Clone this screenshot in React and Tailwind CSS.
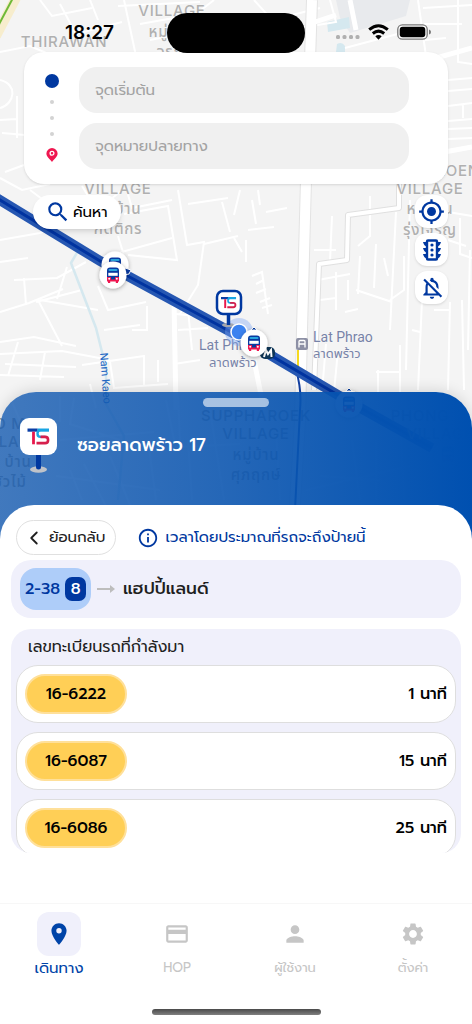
import React from "react";
import {
  MdSearch,
  MdMyLocation,
  MdOutlineNotificationsOff,
  MdOutlineInfo,
  MdLocationOn,
  MdOutlineCreditCard,
  MdPerson,
  MdSettings,
} from "react-icons/md";
import { ChevronLeft } from "lucide-react";

const arrivals = [
  { plate: "16-6222", eta: "1 นาที" },
  { plate: "16-6087", eta: "15 นาที" },
  { plate: "16-6086", eta: "25 นาที" },
];

const tabs = [
  { label: "เดินทาง", icon: MdLocationOn, active: true },
  { label: "HOP", icon: MdOutlineCreditCard },
  { label: "ผู้ใช้งาน", icon: MdPerson },
  { label: "ตั้งค่า", icon: MdSettings },
];

const minorRoads = [
  "M0 52L30 46L58 58L84 53M0 120L17 119M17 96V138M2 133L60 138L120 128M0 80C18 84 15 104 0 108M5 172L24 165",
  "M40 0L52 16L92 8M60 4L76 34L122 22M90 0L98 20M124 0L136 56M118 6L200 2M140 24L196 14L214 0M150 40L170 36",
  "M254 0L272 20L320 8M330 0L336 22L300 28M345 48L420 28M418 0L426 56M423 8L472 5M424 24L462 24M425 40L446 38M458 0V62L472 64",
  "M448 80L472 78M448 91L472 89M448 106L472 103M463 104V118M448 121L472 119M448 129L472 128M448 139L472 138",
  "M0 178L22 190L50 184M0 240L40 233L98 210L122 190M30 190L62 214M82 186L98 212M126 188L132 208L172 200M118 236L126 262M100 258L172 238M124 214L168 206L177 260L128 255",
  "M0 262L28 258M14 280L57 278L86 262M24 278L26 305M0 312L29 303L63 289M36 302L82 290M57 299L67 267M62 346L38 300M40 300L98 310M98 286L108 310L146 302M104 330L140 325M147 306V330L132 330",
  "M0 342L34 337L76 346M0 354L62 351L110 360M5 364L76 367M18 342L8 376M0 375L64 377M45 352L40 380M82 365L144 356M110 362L114 388L168 384M144 355V386M90 384L96 408M158 360V382",
  "M178 190L187 245L204 242L198 285L180 314M204 244L238 236M188 204L228 198M222 202L230 232M176 314L216 318M178 330L208 328M188 310L192 350M174 364L200 360",
  "M240 190L234 215M248 230L274 227M252 200L256 224M246 240V262M258 190L260 205M266 212L287 208M252 276L262 272L268 314M256 284L264 280M256 293L266 289M260 302L270 298M262 308L272 305M234 238L242 252",
  "M314 250H336M332 216L330 262M318 280L350 274M336 272V310M348 280V300M320 300L336 298M345 312L358 309M360 256L358 294M356 290L392 302M370 196V236L358 246M376 244L374 288M384 258L388 276M396 212L390 330M404 256V290L390 300M410 200L406 370",
  "M448 212L472 216M460 218V254L472 258M448 240L466 246M450 302L448 390M470 250L468 350M422 300L418 390M462 300L464 390M434 310H449M412 330L420 332M376 372H400M378 370V392M400 345V392M326 344L322 392M338 350L334 392",
  "M12 402L24 430L56 426M60 396V422M74 398L70 424L120 440M60 440L154 432M70 470L82 500M84 464L108 510M110 456L132 510M56 476L160 490M148 440L156 500M160 448L240 444M188 440L192 500M210 410L224 500",
  "M166 400L174 440M178 396L180 440M300 402L304 444M276 430L280 500M306 490L410 466M320 476L380 480M352 440L360 500M376 440V500M400 410L404 500",
];

function MapBus({ x, y }) {
  return (
    <g transform={`translate(${x} ${y})`}>
      <circle r="13.500" fill="#fff" filter="url(#pinShadow)" />
      <path d="M-6 -4.500Q-6 -7.500 -3 -7.500H3Q6 -7.500 6 -4.500V3H-6Z" fill="#0a3aa0" />
      <path d="M-3.500 -5H3.500" stroke="#29a6e0" strokeWidth="2" strokeLinecap="round" />
      <path d="M-4.700 -2.200H4.700V.8H-4.700Z" fill="#fff" />
      <path d="M-6 2H6V6.500H5V8H2.800V6.500H-2.800V8H-5V6.500H-6Z" fill="#ef1750" />
      <path d="M-2 1.500H2V4.500H-2Z" fill="#0a3aa0" />
      <circle cx="-3.800" cy="3.800" r="1" fill="#fff" />
      <circle cx="3.800" cy="3.800" r="1" fill="#fff" />
    </g>
  );
}

function TsMark() {
  return (
    <g fill="none">
      <path d="M10 1.600H21.500" stroke="#19a5e3" strokeWidth="3.200" />
      <path d="M0 1.600H10" stroke="#0b3fa6" strokeWidth="3.200" />
      <path d="M13 1.600Q10 1.600 10 5Q10 8.400 13 8.400H18" stroke="#19a5e3" strokeWidth="2.400" />
      <path d="M6 3.200V15.800" stroke="#e8174b" strokeWidth="2.800" />
      <path d="M13 8.400H17.500Q20.600 8.400 20.600 11.400Q20.600 14.600 17.500 14.600H9" stroke="#d61f4c" strokeWidth="2.600" />
    </g>
  );
}

function CityMap() {
  return (
    <svg
      className="absolute inset-x-0 top-0 -z-10 h-[560px] w-full"
      viewBox="0 0 472 560"
      preserveAspectRatio="xMidYMin slice"
      role="img"
      aria-label="Map"
    >
      <defs>
        <filter id="pinShadow" x="-40%" y="-40%" width="180%" height="180%">
          <feDropShadow dx="0" dy="1" stdDeviation="2" floodOpacity="0.35" />
        </filter>
      </defs>
      <rect width="472" height="560" fill="#f4f4f4" />
      <path d="M336 0H410L406 16L350 33L340 18Z" fill="#e8eaed" />
      <path d="M327 22L349 17L350 28L328 32Z" fill="#d5e8ef" />
      <path d="M337 44Q342 41 345 46V52H336Z" fill="#d5e8ef" />
      <g fill="none" stroke="#fff" strokeWidth="2">
        {minorRoads.map((d) => (
          <path key={d} d={d} />
        ))}
      </g>
      <g fill="none" strokeLinejoin="round">
        <path d="M312 0L306 180L302 330L300 420L294 520" stroke="#e3e3e3" strokeWidth="12" />
        <path d="M312 0L306 180L302 330L300 420L294 520" stroke="#fff" strokeWidth="10" />
        <path d="M315 22L336 15M350 0L356 30M315 92L472 48M428 155L472 147" stroke="#fff" strokeWidth="5" />
        <path d="M399 184V208L348 215L347 260L319 264L314 390" stroke="#e0e0e0" strokeWidth="6" />
        <path d="M399 184V208L348 215L347 260L319 264L314 390" stroke="#fff" strokeWidth="4" />
        <path d="M174 300L176 410M254 360L264 410" stroke="#fff" strokeWidth="5" />
        <path d="M-4 36L18 -6" stroke="#f7edcd" strokeWidth="10" />
        <path d="M-4 30L14 -4" stroke="#6fb936" strokeWidth="2" />
        <path d="M82 244L71 263L96 328L106 368L106 404L124 436L118 500" stroke="#d5e8ef" strokeWidth="2.500" />
        <path d="M298 350V372" stroke="#f5d91f" strokeWidth="2" />
        <path d="M296 370Q302 390 300 410L295 510" stroke="#123fa3" strokeWidth="2" />
      </g>
      <path d="M-5 197L100 261L233 333L348 401L432 448" fill="none" stroke="#2657b2" strokeWidth="10" />
      <path d="M-5 197L100 261L233 333L348 401L432 448" fill="none" stroke="#0033a0" strokeWidth="3" />

      <g className="font-['Inter','Noto_Sans_Thai',sans-serif] font-medium tracking-wider" fontSize="15" fill="#b0b0b0" stroke="#f8f8f8" strokeWidth="1" paintOrder="stroke" textAnchor="middle">
        <text x="64" y="47">THIRAWAN</text>
        <text x="172" y="16">VILLAGE</text>
        <text x="172" y="37">หมู่บ้าน</text>
        <text x="172" y="57">อรุณ</text>
        <text x="118" y="194">VILLAGE</text>
        <text x="118" y="214">หมู่บ้าน</text>
        <text x="118" y="234">กิตติกร</text>
        <text x="440" y="176">CHAROEN</text>
        <text x="430" y="194">VILLAGE</text>
        <text x="430" y="214">หมู่บ้าน</text>
        <text x="430" y="235">รุ่งเจริญ</text>
      </g>
      <g className="font-['Inter','Noto_Sans_Thai',sans-serif] font-medium tracking-wider" fontSize="15" fill="#a0a0a0" textAnchor="middle">
        <text x="256" y="421">SUPPHAROEK</text>
        <text x="256" y="439">VILLAGE</text>
        <text x="256" y="460">หมู่บ้าน</text>
        <text x="256" y="480">ศุภฤกษ์</text>
        <text x="420" y="421">PHONG</text>
        <text x="440" y="439">VILLAGE</text>
        <text x="18" y="429">O MAI</text>
        <text x="7" y="447">VILLAGE</text>
        <text x="18" y="467">บ้าน</text>
        <text x="10" y="487">ชัวไม้</text>
      </g>
      <g className="font-['Roboto','Noto_Sans_Thai',sans-serif]" fontSize="14" fill="#7783a8" stroke="#f8f8f8" strokeWidth="1" paintOrder="stroke">
        <text x="313" y="342">Lat Phrao</text>
        <text x="313" y="358" fontSize="13">ลาดพร้าว</text>
        <text x="199" y="350">Lat Phrao</text>
        <text x="209" y="367" fontSize="13">ลาดพร้าว</text>
      </g>
      <text transform="translate(100 353) rotate(86)" className="font-['Roboto',sans-serif]" fontSize="11" fill="#2368c4">Nam Kaeo</text>

      <g transform="translate(296 338)">
        <rect width="12" height="12" rx="2" fill="#8d90a5" />
        <path d="M3 9.500V3.500Q3 2.500 4 2.500H8Q9 2.500 9 3.500V9.500M3 6H9" fill="none" stroke="#fff" strokeWidth="1.300" />
      </g>

      <MapBus x={115} y={265} />
      <path d="M125 268L131 270L129 274L124 275Z" fill="#0a3aa0" stroke="#fff" />
      <MapBus x={113} y={275} />

      <circle cx="239" cy="332" r="14" fill="#7fa8f5" opacity="0.4" />
      <ellipse cx="228" cy="325" rx="6" ry="2" fill="#a4a7ad" />
      <path d="M228.500 312V325" stroke="#0038a0" strokeWidth="3.500" />
      <rect x="217" y="291" width="24" height="23" rx="6" fill="#fff" stroke="#0038a0" strokeWidth="2.500" />
      <g transform="translate(221 297) scale(.7)">
        <TsMark />
      </g>
      <circle cx="239" cy="332" r="8" fill="#3b82f0" stroke="#fff" strokeWidth="1.500" />
      <rect x="260" y="347" width="15" height="12" rx="5" fill="#0d3557" />
      <path d="M264 357L266 350L268 354L271 350L271.500 357" fill="none" stroke="#fff" strokeWidth="2" />
      <path d="M248 333L254 327L260 333Z" fill="#0038a0" stroke="#fff" />
      <MapBus x={254} y={343} />
      <path d="M342 395L349 388L356 395Z" fill="#0038a0" stroke="#fff" />
      <MapBus x={349} y={404} />
      <g opacity="0.35">
        <MapBus x={448} y={454} />
      </g>
    </svg>
  );
}

function StatusBar() {
  return (
    <header className="relative z-10 grid h-13 grid-cols-[1fr_138px_1fr] items-start pt-[13px]">
      <time className="justify-self-center pl-3 font-['Inter',sans-serif] text-[19px] leading-10 font-semibold text-black">18:27</time>
      <div className="h-10 rounded-full bg-black" />
      <div className="flex h-[38px] items-center gap-2 pl-[31px]">
        <svg width="24" height="6" viewBox="0 0 24 6" fill="#b0b0b0" className="mt-2.5" aria-hidden="true">
          <rect width="4" height="4" y="1" rx="1.500" />
          <rect x="6.500" width="4" height="4" y="1" rx="1.500" />
          <rect x="13" width="4" height="4" y="1" rx="1.500" />
          <rect x="19.500" width="4" height="4" y="1" rx="1.500" />
        </svg>
        <svg width="21" height="16" viewBox="0 0 21 16" fill="none" stroke="#000" strokeWidth="3" aria-hidden="true">
          <path d="M1.200 5.700Q10.500 -2.200 19.800 5.700" />
          <path d="M4.800 9.500Q10.500 4.800 16.200 9.500" />
          <path d="M7.300 12.300Q10.500 9.800 13.700 12.300L10.500 15.700Z" fill="#000" stroke="none" />
        </svg>
        <svg width="35" height="16" viewBox="0 0 35 16" aria-hidden="true">
          <rect x=".8" y=".8" width="29.400" height="14.400" rx="4.500" fill="#fff" stroke="#777" strokeWidth="1.300" />
          <rect x="2.700" y="2.700" width="25.600" height="10.600" rx="3" />
          <path d="M32 5.500Q34 6 34 8Q34 10 32 10.500Z" fill="#777" />
        </svg>
      </div>
    </header>
  );
}

function RouteForm() {
  return (
    <form className="mx-6 flex rounded-[20px] bg-white py-[15px] pr-[39px] shadow-sm" onSubmit={(e) => e.preventDefault()}>
      <div className="flex w-[55px] flex-col items-center justify-between pt-[7px] pb-[7px]" aria-hidden="true">
        <span className="size-3.5 rounded-full bg-[#0038a0]" />
        <span className="size-1 rounded-full bg-[#d3d3d3]" />
        <span className="size-1 rounded-full bg-[#d3d3d3]" />
        <span className="size-1 rounded-full bg-[#d3d3d3]" />
        <svg width="12" height="14" viewBox="0 0 12 14">
          <path d="M6 0A5.600 5.600 0 0 1 11.600 5.600C11.600 9 8.400 11 6 14C3.600 11 .4 9 .4 5.600A5.600 5.600 0 0 1 6 0Z" fill="#ef1750" />
          <circle cx="6" cy="5.300" r="1.900" fill="none" stroke="#fff" strokeWidth="1.300" />
        </svg>
      </div>
      <div className="flex flex-1 flex-col gap-2.5">
        <input type="text" aria-label="จุดเริ่มต้น" placeholder="จุดเริ่มต้น" className="h-[46px] w-full rounded-[18px] bg-[#f0f0f0] px-4 text-[15px] placeholder:text-[#a3a3a3]" />
        <input type="text" aria-label="จุดหมายปลายทาง" placeholder="จุดหมายปลายทาง" className="h-[46px] w-full rounded-[18px] bg-[#f0f0f0] px-4 text-[15px] placeholder:text-[#a3a3a3]" />
      </div>
    </form>
  );
}

function TrafficLightIcon() {
  return (
    <svg width="20" height="22" viewBox="0 0 20 22" fill="#0038a0" aria-hidden="true">
      <path d="M1 3H5V7.500Q2 7 1 3ZM1 9H5V13.500Q2 13 1 9ZM1 15H5V19.500Q2 19 1 15ZM19 3H15V7.500Q18 7 19 3ZM19 9H15V13.500Q18 13 19 9ZM19 15H15V19.500Q18 19 19 15Z" />
      <rect x="5" y="1.500" width="10" height="19" rx="1" fill="#fff" stroke="#0038a0" strokeWidth="2.400" />
      <circle cx="10" cy="6" r="1.600" />
      <circle cx="10" cy="11" r="1.600" />
      <circle cx="10" cy="16" r="1.600" />
    </svg>
  );
}

function MapControls() {
  const control = "grid size-[33px] place-items-center rounded-xl bg-white text-[#0038a0] shadow-sm";
  return (
    <div className="flex h-[208px] items-start justify-between pt-[11px] pr-6 pl-[33px]">
      <button type="button" className="flex h-[34px] items-center gap-0.5 rounded-full bg-white pr-3.5 pl-3 text-[15px] text-black shadow-md">
        <MdSearch className="size-[26px] text-[#0038a0]" />
        ค้นหา
      </button>
      <div className="flex flex-col gap-[5px]">
        <button type="button" aria-label="ตำแหน่งของฉัน" className={control}>
          <MdMyLocation className="size-[27px]" />
        </button>
        <button type="button" aria-label="การจราจร" className={control}>
          <TrafficLightIcon />
        </button>
        <button type="button" aria-label="ปิดการแจ้งเตือน" className={control}>
          <MdOutlineNotificationsOff className="size-[26px]" />
        </button>
      </div>
    </div>
  );
}

function StopHeader() {
  return (
    <div className="h-[113px] pt-1.5">
      <div className="mx-auto h-[9px] w-[66px] rounded-full bg-white/60" />
      <div className="flex items-start gap-5 pt-[11px] pl-5">
        <svg width="37" height="55" viewBox="0 0 37 55" aria-hidden="true">
          <ellipse cx="18.500" cy="51.500" rx="8.500" ry="3.200" fill="#bfc3c9" />
          <path d="M18.500 35V49" stroke="#0038a0" strokeWidth="5" strokeLinecap="round" />
          <rect width="37" height="37" rx="9" fill="#fff" />
          <g transform="translate(7.500 10.500)">
            <TsMark />
          </g>
        </svg>
        <h1 className="pt-[13px] text-lg leading-7 font-medium text-white">ซอยลาดพร้าว 17</h1>
      </div>
    </div>
  );
}

export default function App() {
  return (
    <div className="relative isolate flex min-h-screen flex-col overflow-hidden bg-[#f4f4f4] font-['Prompt','Inter','Noto_Sans_Thai',sans-serif]">
      <CityMap />
      <StatusBar />
      <RouteForm />
      <MapControls />

      <main className="flex flex-1 flex-col rounded-t-[36px] bg-linear-to-r from-[#145ab0]/80 via-[#0c56b0]/90 to-[#0050b0] shadow-[0_-2px_14px_rgba(0,0,0,0.12)]">
        <StopHeader />
        <div className="flex flex-1 flex-col rounded-t-[34px] bg-white pt-[15px]">
          <div className="flex items-center gap-[21px] px-4">
            <button type="button" className="flex h-[35px] items-center gap-1 rounded-full border border-[#e0e0e0] pr-2.5 pl-1.5 text-[15px] text-[#1f1f1f]">
              <ChevronLeft className="size-[22px]" />
              ย้อนกลับ
            </button>
            <p className="flex items-center gap-1.5 text-[15px] text-[#0038a0]">
              <MdOutlineInfo className="size-[22px] shrink-0" />
              เวลาโดยประมาณที่รถจะถึงป้ายนี้
            </p>
          </div>

          <section className="mx-[11px] mt-[5px] flex h-[58px] items-center rounded-[20px] bg-[#f0f0fb] px-[9px]">
            <div className="flex h-[42px] items-center gap-[5px] rounded-2xl bg-[#aecdf9] px-[5px] text-base font-medium text-[#0038a0]">
              2-38
              <span className="grid h-6 w-[21px] place-items-center rounded-[7px] bg-[#0038a0] text-white">8</span>
            </div>
            <svg width="18" height="10" viewBox="0 0 18 10" className="mr-2 ml-1.5" fill="#bdbdbd" aria-hidden="true">
              <path d="M0 4H13V1L18 5L13 9V6H0Z" />
            </svg>
            <h2 className="text-[17px] font-medium text-[#1f1f1f]">แฮปปี้แลนด์</h2>
          </section>

          <section className="mx-[11px] mt-[11px] h-56 overflow-hidden rounded-[20px] bg-[#f0f0fb] px-[5px]">
            <h3 className="h-9 pl-3 text-base leading-9 text-[#1f1f1f]">เลขทะเบียนรถที่กำลังมา</h3>
            <ul className="flex flex-col gap-[9px]">
              {arrivals.map((bus) => (
                <li key={bus.plate} className="flex h-[58px] shrink-0 items-center justify-between rounded-[22px] border border-[#dedede] bg-white px-2 text-base font-medium text-black">
                  <span className="grid h-10 w-[102px] place-items-center rounded-full border-2 border-[#ffe09a] bg-[#ffcf56]">{bus.plate}</span>
                  <span>{bus.eta}</span>
                </li>
              ))}
            </ul>
          </section>

          <footer className="mt-auto border-t border-[#f7f7f7]">
            <nav className="grid h-[105px] grid-cols-4 pt-2">
              {tabs.map(({ label, icon: Icon, active }) => (
                <a
                  key={label}
                  href="#"
                  aria-current={active ? "page" : undefined}
                  className={active ? "flex flex-col items-center text-[15px] text-[#0044a8]" : "flex flex-col items-center text-[13px] text-[#c6c6c6]"}
                >
                  <span className={active ? "grid size-11 place-items-center rounded-xl bg-[#f0f0fb]" : "grid size-11 place-items-center"}>
                    <Icon className="size-[26px]" />
                  </span>
                  <span className="leading-6">{label}</span>
                </a>
              ))}
            </nav>
            <div className="mx-auto mb-[9px] h-[6px] w-[169px] rounded-full bg-linear-to-b from-[#4a4a4a] to-[#808080]" />
          </footer>
        </div>
      </main>
    </div>
  );
}
